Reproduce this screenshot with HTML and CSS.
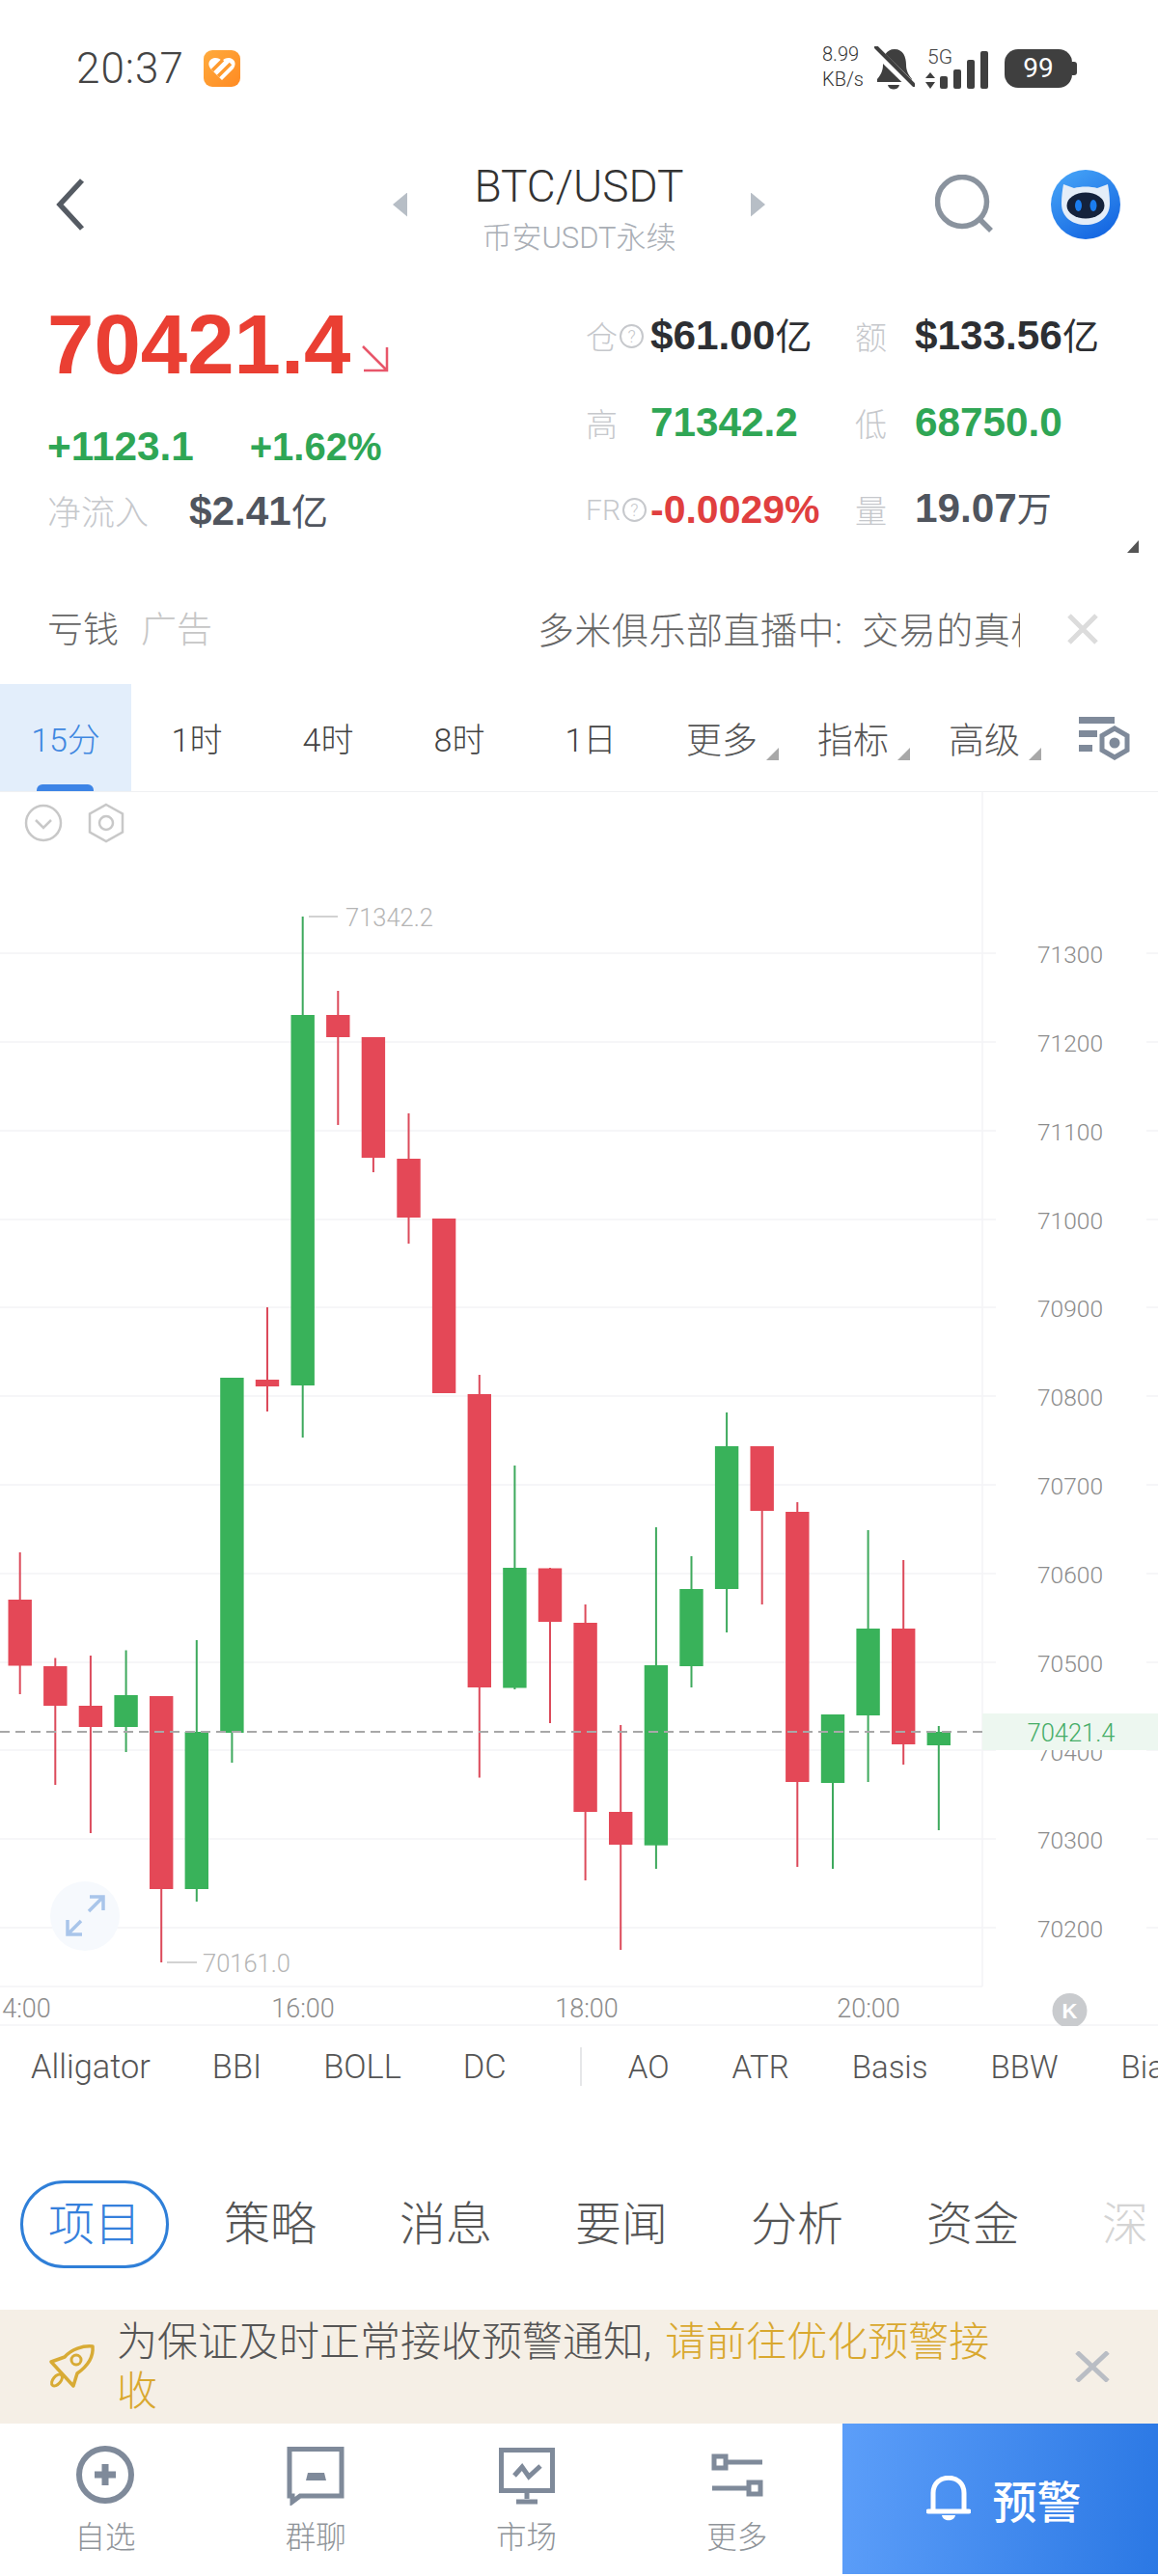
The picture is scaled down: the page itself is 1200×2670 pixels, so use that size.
FILE: index.html
```html
<!DOCTYPE html>
<html lang="zh-CN">
<head>
  <meta charset="UTF-8" />
  <meta name="viewport" content="width=device-width, initial-scale=1.0"/>
  <title>BTC/USDT</title>
  <link rel="stylesheet" href="styles.css">
</head>
<body>

  <!-- Status bar -->
  <div class="status-bar">
    <span class="clock">20:37</span>
    <svg class="app-icon" viewBox="0 0 38 38">
      <defs>
        <linearGradient id="appGrad" x1="0" y1="0" x2="1" y2="1">
          <stop offset="0" stop-color="#ffab3d"/>
          <stop offset="1" stop-color="#ff8a22"/>
        </linearGradient>
      </defs>
      <rect width="38" height="38" rx="9" fill="url(#appGrad)"/>
      <path d="M19 31 L7 19 C3 13 7 8 12 8 C15 8 17 9 19 11 C21 9 23 8 26 8 C31 8 35 13 31 19 Z" fill="#fff"/>
      <path d="M9 21 L20 10 M15 27 L28 14" stroke="#ff9a2e" stroke-width="3.5" fill="none"/>
    </svg>
    <div class="status-right">
      <div class="net-speed"><span>8.99</span><span>KB/s</span></div>
      <svg class="bell-off" viewBox="0 0 42 46">
        <path d="M21 3 C30 3 33 11 33 19 C33 25 35 29 39 34 V37 H3 V34 C7 29 9 25 9 19 C9 11 12 3 21 3 Z" fill="#3f3f3f"/>
        <path d="M14 40 H26 C25 46 15 46 14 40 Z" fill="#3f3f3f"/>
        <path d="M0 3 L41 43" stroke="#fff" stroke-width="9"/>
        <path d="M2 1 L41 40" stroke="#3f3f3f" stroke-width="4" stroke-linecap="round"/>
      </svg>
      <svg class="signal" viewBox="0 0 66 46">
        <text class="signal-text" x="2" y="18">5G</text>
        <path d="M5 27 L10 33 H0 Z M5 44 L0 37 H10 Z" fill="#3f3f3f"/>
        <rect x="15" y="31" width="8" height="13" rx="2" fill="#3f3f3f"/>
        <rect x="29" y="24" width="8" height="20" rx="2" fill="#3f3f3f"/>
        <rect x="43" y="14" width="8" height="30" rx="2" fill="#3f3f3f"/>
        <rect x="57" y="5" width="8" height="39" rx="2" fill="#3f3f3f"/>
      </svg>
      <div class="battery">99</div>
    </div>
  </div>

  <!-- Title bar -->
  <header class="nav-bar">
    <svg class="back" viewBox="0 0 30 56">
      <path d="M27 3 L4 28 L27 53" fill="none" stroke="#555b63" stroke-width="5.5"/>
    </svg>
    <div class="nav-center">
      <span class="tri tri-left"></span>
      <div class="nav-title">
        <div class="symbol">BTC/USDT</div>
        <div class="market">币安USDT永续</div>
      </div>
      <span class="tri tri-right"></span>
    </div>
    <div class="nav-right">
      <svg class="search" viewBox="0 0 62 62">
        <circle cx="28" cy="28" r="25.5" fill="none" stroke="#8a939e" stroke-width="5.5"/>
        <path d="M47 47 L58 58" stroke="#8a939e" stroke-width="5.5"/>
      </svg>
      <svg class="bot" viewBox="0 0 72 72">
        <defs>
          <linearGradient id="botGrad" x1="0.2" y1="0" x2="0.8" y2="1">
            <stop offset="0" stop-color="#45a3f7"/>
            <stop offset="1" stop-color="#1263e0"/>
          </linearGradient>
        </defs>
        <circle cx="36" cy="36" r="36" fill="url(#botGrad)"/>
        <path d="M13 15 L24 19 C31 17 41 17 48 19 L59 15 C60 21 61 27 61 35 C61 49 50 57 36 57 C22 57 11 49 11 35 C11 27 12 21 13 15 Z" fill="#e4edf8"/>
        <ellipse cx="36" cy="37" rx="19.5" ry="13.5" fill="#14223c"/>
        <ellipse cx="28.5" cy="37" rx="3.5" ry="6" fill="#1b7df0"/>
        <ellipse cx="44" cy="37" rx="3.5" ry="6" fill="#1b7df0"/>
      </svg>
    </div>
  </header>

  <!-- Price stats -->
  <section class="stats">
    <div class="stats-left">
      <div class="price-row">
        <span class="price">70421.4</span>
        <svg class="price-arrow" viewBox="0 0 28 28">
          <path d="M1 1 L25 25 M26 2 V26 H2" fill="none" stroke="#e8566a" stroke-width="2.5"/>
        </svg>
      </div>
      <div class="change-row">
        <span class="num green">+1123.1</span>
        <span class="num green pct">+1.62%</span>
      </div>
      <div class="inflow-row">
        <span class="stat-label wide">净流入</span>
        <span class="num slate">$2.41<span class="unit">亿</span></span>
      </div>
    </div>
    <div class="stats-right">
      <div class="stat-label">仓<span class="help">?</span></div>
      <div class="num dark">$61.00<span class="unit">亿</span></div>
      <div class="stat-label">额</div>
      <div class="num dark">$133.56<span class="unit">亿</span></div>

      <div class="stat-label">高</div>
      <div class="num green">71342.2</div>
      <div class="stat-label">低</div>
      <div class="num green">68750.0</div>

      <div class="stat-label fr">FR<span class="help">?</span></div>
      <div class="num red">-0.0029%</div>
      <div class="stat-label">量</div>
      <div class="num slate">19.07<span class="unit small">万</span></div>
    </div>
    <span class="stats-corner"></span>
  </section>

  <!-- Ad line -->
  <div class="ad-row">
    <div class="ad-left">
      <span class="ad-title">亏钱</span>
      <span class="ad-tag">广告</span>
    </div>
    <div class="ad-text">多米俱乐部直播中: 交易的真相</div>
    <svg class="ad-close" viewBox="0 0 32 32">
      <path d="M2 2 L30 30 M30 2 L2 30" stroke="#dcdcdc" stroke-width="5"/>
    </svg>
  </div>

  <!-- Period tabs -->
  <nav class="period-tabs">
    <a class="period active">15分</a>
    <a class="period">1时</a>
    <a class="period">4时</a>
    <a class="period">8时</a>
    <a class="period">1日</a>
    <a class="period word">更多</a>
    <a class="period word">指标</a>
    <a class="period word">高级</a>
    <div class="period-icon">
      <svg viewBox="0 0 56 46" width="56" height="46">
        <path d="M1 1 H38 V8 H1 Z M1 15 H20 V22 H1 Z M1 30 H15 V37 H1 Z" fill="#7f8a9a"/>
        <path d="M38 13 L51 20.5 V35.5 L38 43 L25 35.5 V20.5 Z" fill="none" stroke="#7f8a9a" stroke-width="5"/>
        <circle cx="38" cy="28" r="5.5" fill="#7f8a9a"/>
      </svg>
    </div>
  </nav>

  <!-- Chart canvas, drawn in page coordinates -->
  <svg class="chart" viewBox="0 821 1200 1279">
    <g class="grid">
      <path d="M0 988H1032M1188 988H1200M0 1080H1032M1188 1080H1200M0 1172H1032M1188 1172H1200M0 1264H1032M1188 1264H1200"/>
      <path d="M0 1355H1032M1188 1355H1200M0 1447H1032M1188 1447H1200M0 1539H1032M1188 1539H1200M0 1631H1032M1188 1631H1200"/>
      <path d="M0 1723H1032M1188 1723H1200M0 1814H1032M1188 1814H1200M0 1906H1032M1188 1906H1200M0 1998H1032M1188 1998H1200"/>
      <path d="M1018 821V2059M0 2059H1018M0 2099H1200"/>
    </g>

    <g class="icon-line">
      <circle cx="45" cy="853" r="18"/>
      <path d="M37 850 L45 858 L53 850"/>
      <path d="M110 834 L127 843.500 V862.500 L110 872 L93 862.500 V843.500 Z"/>
      <circle cx="110" cy="853" r="7"/>
    </g>

    <g class="axis">
      <text x="1109" y="998">71300</text>
      <text x="1109" y="1090">71200</text>
      <text x="1109" y="1182">71100</text>
      <text x="1109" y="1274">71000</text>
      <text x="1109" y="1365">70900</text>
      <text x="1109" y="1457">70800</text>
      <text x="1109" y="1549">70700</text>
      <text x="1109" y="1641">70600</text>
      <text x="1109" y="1733">70500</text>
      <text x="1109" y="1825">70400</text>
      <text x="1109" y="1916">70300</text>
      <text x="1109" y="2008">70200</text>
    </g>

    <g class="wick-down">
      <path d="M20.7 1609V1756M57.300 1718.500V1850M93.900 1716V1900M167.200 1758V2034M277 1355V1463"/>
      <path d="M350.300 1027V1166M386.900 1075V1215M423.500 1154V1289M496.800 1425V1842.500M570 1625V1786"/>
      <path d="M606.600 1663V1949M643.200 1788V2021M789.700 1499V1663M826.300 1557V1935M936.200 1617V1829"/>
    </g>
    <g class="wick-up">
      <path d="M130.600 1710.500V1816M203.800 1700V1971M240.400 1428V1827M313.700 950V1490M533.400 1519V1751"/>
      <path d="M679.900 1583V1937M716.500 1613V1749M753.100 1464V1692M863 1777V1937M899.600 1586V1847M972.800 1789V1897"/>
    </g>

    <g class="down">
      <rect x="8.500" y="1658" width="24.400" height="68.500"/>
      <rect x="45.100" y="1727" width="24.400" height="41"/>
      <rect x="81.700" y="1768" width="24.400" height="22"/>
      <rect x="155" y="1758" width="24.400" height="200"/>
      <rect x="264.800" y="1430" width="24.400" height="7"/>
      <rect x="338.100" y="1052" width="24.400" height="23"/>
      <rect x="374.700" y="1075" width="24.400" height="125"/>
      <rect x="411.300" y="1201" width="24.400" height="61"/>
      <rect x="447.900" y="1263" width="24.400" height="181"/>
      <rect x="484.600" y="1445" width="24.400" height="304"/>
      <rect x="557.800" y="1625.500" width="24.400" height="55.500"/>
      <rect x="594.400" y="1682" width="24.400" height="196"/>
      <rect x="631" y="1878" width="24.400" height="34"/>
      <rect x="777.500" y="1499" width="24.400" height="67"/>
      <rect x="814.100" y="1567" width="24.400" height="280"/>
      <rect x="924" y="1688" width="24.400" height="120"/>
    </g>
    <g class="up">
      <rect x="118.400" y="1757" width="24.400" height="33"/>
      <rect x="191.600" y="1795" width="24.400" height="163"/>
      <rect x="228.200" y="1428" width="24.400" height="368"/>
      <rect x="301.500" y="1052" width="24.400" height="384"/>
      <rect x="521.200" y="1625" width="24.400" height="124.500"/>
      <rect x="667.700" y="1726" width="24.400" height="186.700"/>
      <rect x="704.300" y="1647" width="24.400" height="80"/>
      <rect x="740.900" y="1499" width="24.400" height="148"/>
      <rect x="850.800" y="1777" width="24.400" height="71"/>
      <rect x="887.400" y="1688" width="24.400" height="90"/>
      <rect x="960.600" y="1795" width="24.400" height="14"/>
    </g>

    <path class="last-line" d="M0 1795H1018"/>
    <rect class="price-tag" x="1018" y="1776" width="182" height="38"/>
    <text class="price-tag-text" x="1110" y="1805">70421.4</text>

    <path class="extreme-line" d="M320 950H350M173 2034H204"/>
    <text class="extreme" x="358" y="960">71342.2</text>
    <text class="extreme" x="210" y="2044">70161.0</text>

    <circle class="expand-bg" cx="88" cy="1986" r="36"/>
    <path class="expand" d="M92 1981 L106 1967 M93 1966 H107 V1980 M84 1991 L71 2004 M70 1990 V2005 H85"/>

    <g class="time">
      <text x="20" y="2091">14:00</text>
      <text x="314" y="2091">16:00</text>
      <text x="608" y="2091">18:00</text>
      <text x="900" y="2091">20:00</text>
    </g>
    <circle class="k-btn" cx="1108.500" cy="2084" r="18"/>
    <text class="k-text" x="1108.500" y="2092">K</text>
  </svg>

  <!-- Indicator names -->
  <div class="indicators">
    <div class="indicator-group">
      <span>Alligator</span>
      <span>BBI</span>
      <span>BOLL</span>
      <span>DC</span>
    </div>
    <span class="indicator-sep"></span>
    <div class="indicator-group tight">
      <span>AO</span>
      <span>ATR</span>
      <span>Basis</span>
      <span>BBW</span>
      <span>Bias</span>
    </div>
  </div>

  <!-- Info tabs -->
  <nav class="info-tabs">
    <a class="info-tab active">项目</a>
    <a class="info-tab">策略</a>
    <a class="info-tab">消息</a>
    <a class="info-tab">要闻</a>
    <a class="info-tab">分析</a>
    <a class="info-tab">资金</a>
    <a class="info-tab faded">深</a>
  </nav>

  <!-- Notice -->
  <div class="notice">
    <svg class="rocket" viewBox="0 0 50 50">
      <path d="M46 4 C36 3 24 7 17 15 L3 20 L26 45 L30 32 C40 25 47 15 46 4 Z" fill="none" stroke="#d8ab35" stroke-width="3.5" stroke-linejoin="round"/>
      <circle cx="29" cy="18" r="5" fill="none" stroke="#d8ab35" stroke-width="3"/>
      <ellipse cx="9" cy="39" rx="4" ry="7" transform="rotate(40 9 39)" fill="none" stroke="#d8ab35" stroke-width="3"/>
    </svg>
    <p class="notice-text">为保证及时正常接收预警通知, <span class="notice-link">请前往优化预警接收</span></p>
    <svg class="notice-close" viewBox="0 0 36 32">
      <path d="M2 1 L34 31 M34 1 L2 31" stroke="#b9bdc4" stroke-width="5"/>
    </svg>
  </div>

  <!-- Bottom bar -->
  <footer class="bottom-bar">
    <a class="bottom-item">
      <svg viewBox="0 0 64 64" width="64" height="64">
        <circle cx="32" cy="32" r="27" fill="none" stroke="#7f8a9a" stroke-width="6"/>
        <path d="M32 21 V43 M21 32 H43" stroke="#7f8a9a" stroke-width="7"/>
      </svg>
      <span>自选</span>
    </a>
    <a class="bottom-item">
      <svg viewBox="0 0 64 64" width="64" height="64">
        <path d="M5 6.500 H59 V55 H16 L8 61 V55 H5 Z" transform="translate(0 -1)" fill="none" stroke="#7f8a9a" stroke-width="5"/>
        <path d="M24 30 H41 L43 38 H22 Z" fill="#7f8a9a"/>
      </svg>
      <span>群聊</span>
    </a>
    <a class="bottom-item">
      <svg viewBox="0 0 64 64" width="64" height="64">
        <rect x="5.500" y="6.500" width="53" height="42" fill="none" stroke="#7f8a9a" stroke-width="5"/>
        <path d="M19 33 L27 24 L34 34 L46 23" fill="none" stroke="#7f8a9a" stroke-width="5"/>
        <path d="M32 49 V57 M21 60 H43" stroke="#7f8a9a" stroke-width="5"/>
      </svg>
      <span>市场</span>
    </a>
    <a class="bottom-item">
      <svg viewBox="0 0 64 64" width="64" height="64">
        <rect x="8" y="13" width="12" height="12" fill="none" stroke="#7f8a9a" stroke-width="5"/>
        <path d="M22 19 H58" stroke="#7f8a9a" stroke-width="5"/>
        <rect x="44" y="40" width="12" height="12" fill="none" stroke="#7f8a9a" stroke-width="5"/>
        <path d="M6 46 H42" stroke="#7f8a9a" stroke-width="5"/>
      </svg>
      <span>更多</span>
    </a>
    <a class="alert-btn">
      <svg viewBox="0 0 46 48" width="46" height="48">
        <path d="M7 35 V18 C7 -3 39 -3 39 18 V35 M2 37 H44" fill="none" stroke="#fff" stroke-width="5" stroke-linecap="round"/>
        <path d="M16 41 C17 48 29 48 30 41 Z" fill="#fff"/>
      </svg>
      <span>预警</span>
    </a>
  </footer>

</body>
</html>
```

FILE: styles.css
```css
* { margin: 0; padding: 0; box-sizing: border-box; }
body {
  width: 1200px;
  height: 2670px;
  overflow: hidden;
  background: #fff;
  color: #555;
  font-family: 'Roboto', 'Noto Sans CJK SC', sans-serif;
  font-weight: 300;
}

/* --- Status bar --- */
.status-bar {
  height: 100px;
  padding: 42px 89px 0 79px;
  display: flex;
  align-items: center;
}

.clock {
  font-size: 44px;
  letter-spacing: 1px;
  color: #444;
  line-height: 58px;
}

.app-icon {
  width: 38px;
  height: 38px;
  margin-left: 20px;
}

.status-right {
  margin-left: auto;
  display: flex;
  align-items: center;
}

.net-speed {
  width: 42px;
  display: flex;
  flex-direction: column;
  margin-top: -5px;
  font-size: 20px;
  line-height: 26px;
  color: #333;
  white-space: nowrap;
}

.bell-off {
  width: 42px;
  height: 46px;
  margin-left: 12px;
}

.signal {
  width: 66px;
  height: 46px;
  margin-left: 11px;
}

.signal-text {
  font-size: 21px;
  fill: #444;
}

.battery {
  position: relative;
  width: 70px;
  height: 40px;
  margin-left: 16px;
  background: #3f3f3f;
  border-radius: 14px;
  color: #fff;
  font-size: 28px;
  font-weight: 400;
  line-height: 40px;
  text-align: center;
}

.battery::after {
  content: "";
  position: absolute;
  right: -5px;
  top: 13px;
  width: 5px;
  height: 14px;
  background: #3f3f3f;
  border-radius: 0 3px 3px 0;
}

/* --- Title bar --- */
.nav-bar {
  height: 174px;
  padding-top: 50px;
  display: grid;
  grid-template-columns: 1fr 386px 1fr;
  align-items: center;
}

.back {
  width: 30px;
  height: 56px;
  margin-left: 58px;
}

.nav-center {
  display: flex;
  align-items: center;
  justify-content: space-between;
}

.tri {
  width: 15px;
  height: 25px;
  background: #b7bec6;
}

.tri-left { clip-path: polygon(100% 0, 100% 100%, 0 50%); }
.tri-right { clip-path: polygon(0 0, 100% 50%, 0 100%); }

.nav-title {
  margin-top: 10px;
  text-align: center;
}

.symbol {
  font-size: 46px;
  line-height: 52px;
  color: #333;
}

.market {
  margin-top: 8px;
  font-size: 31px;
  line-height: 40px;
  color: #a9aeb5;
}

.nav-right {
  display: flex;
  align-items: center;
  justify-content: flex-end;
  padding-right: 39px;
  gap: 58px;
}

.search { width: 62px; height: 62px; }
.bot { width: 72px; height: 72px; }

/* --- Price stats --- */
.stats {
  position: relative;
  height: 326px;
  padding-top: 29px;
  display: flex;
}

.stats-left {
  width: 607px;
  padding: 4px 0 0 49px;
}

.price-row {
  height: 100px;
  display: flex;
  align-items: center;
}

.price {
  font-family: 'Liberation Sans', sans-serif;
  font-size: 87px;
  font-weight: 700;
  color: #ea3f33;
}

.price-arrow {
  width: 28px;
  height: 28px;
  margin: 29px 0 0 12px;
}

.num {
  font-family: 'Liberation Sans', 'Noto Sans CJK SC', sans-serif;
  font-size: 42.3px;
  font-weight: 700;
  line-height: 50px;
  white-space: nowrap;
}

.unit {
  font-size: 38px;
  font-weight: 400;
}

.unit.small { font-size: 36px; }

.green { color: #2fa655; }
.red { color: #e03f3f; font-size: 41px; }
.dark { color: #2d2f33; }
.slate { color: #50555e; }

.change-row {
  margin-top: 31px;
  display: flex;
  gap: 58px;
}

.num.pct { font-size: 40px; }

.inflow-row {
  margin-top: 17px;
  display: flex;
  align-items: center;
  gap: 42px;
}

.stat-label {
  display: flex;
  align-items: center;
  font-size: 33px;
  color: #c6c8cc;
}

.stat-label.wide {
  margin-top: -5px;
  font-size: 35px;
}

.stat-label.fr { font-size: 30px; }

.help {
  width: 25px;
  height: 25px;
  margin-left: 2px;
  border: 2px solid #c6c8cc;
  border-radius: 50%;
  font-size: 18px;
  line-height: 21px;
  text-align: center;
}

.stats-right {
  display: grid;
  grid-template-columns: 67px 212px 62px 1fr;
  grid-auto-rows: 90px;
  align-items: center;
  height: 270px;
  flex: 1;
}

.stats-corner {
  position: absolute;
  left: 1168px;
  top: 286px;
  width: 12px;
  height: 13px;
  background: #555;
  clip-path: polygon(100% 0, 100% 100%, 0 100%);
}

/* --- Ad line --- */
.ad-row {
  height: 109px;
  padding: 0 62px 9px 49px;
  display: flex;
  align-items: center;
}

.ad-left {
  flex: 1;
  display: flex;
  gap: 23px;
  font-size: 37px;
}

.ad-title { color: #666; }
.ad-tag { color: #c6c6c6; }

.ad-text {
  width: 500px;
  overflow: hidden;
  white-space: nowrap;
  font-size: 38px;
  letter-spacing: 0.5px;
  word-spacing: 10px;
  color: #666;
}

.ad-close {
  width: 32px;
  height: 32px;
  margin: 4px 0 0 49px;
}

/* --- Period tabs --- */
.period-tabs {
  height: 112px;
  border-bottom: 1px solid #f0f1f3;
  display: flex;
}

.period {
  position: relative;
  width: 136px;
  display: flex;
  align-items: center;
  justify-content: center;
  font-size: 34px;
  color: #444;
}

.period.word {
  font-size: 37px;
  color: #555;
}

.period.word::after {
  content: "";
  position: absolute;
  right: 9px;
  top: 66px;
  width: 13px;
  height: 13px;
  background: #a8a8a8;
  clip-path: polygon(100% 0, 100% 100%, 0 100%);
}

.period.active {
  background: #e3eefb;
  color: #3f87e0;
}

.period.active::after {
  content: "";
  position: absolute;
  left: 38px;
  bottom: 0;
  width: 59px;
  height: 7px;
  background: #3d84e6;
  border-radius: 6px 6px 0 0;
}

.period-icon {
  flex: 1;
  padding-left: 2px;
  display: flex;
  align-items: center;
  justify-content: center;
}

/* --- Chart --- */
.chart {
  display: block;
  width: 1200px;
  height: 1279px;
}

.grid path {
  fill: none;
  stroke: #f3f4f6;
  stroke-width: 1.5;
}

.icon-line circle,
.icon-line path {
  fill: none;
  stroke: #c8c8c8;
  stroke-width: 2.5;
}

.axis text {
  font-size: 24.5px;
  fill: #8c8c8c;
  text-anchor: middle;
}

.wick-down path { stroke: #dc4a5b; stroke-width: 2; fill: none; }
.wick-up path { stroke: #3ea95d; stroke-width: 2; fill: none; }
.down rect { fill: #e44857; }
.up rect { fill: #39b25a; }

.last-line {
  stroke: #a8a8a8;
  stroke-width: 2;
  stroke-dasharray: 10 6;
  fill: none;
}

.price-tag { fill: #edf7f0; }

.price-tag-text {
  font-size: 25.5px;
  fill: #45ad67;
  text-anchor: middle;
}

.extreme-line {
  stroke: #c4c4c4;
  stroke-width: 1.5;
  fill: none;
}

.extreme {
  font-size: 25.5px;
  fill: #b5b5b5;
}

.expand-bg { fill: #f6f9fd; }

.expand {
  fill: none;
  stroke: #a9c5ea;
  stroke-width: 3.5;
}

.time text {
  font-size: 27px;
  fill: #8c8c8c;
  text-anchor: middle;
}

.k-btn { fill: #c9cbce; }

.k-text {
  font-family: 'Liberation Sans', sans-serif;
  font-size: 22px;
  font-weight: 700;
  fill: #fff;
  text-anchor: middle;
}

/* --- Indicator names --- */
.indicators {
  height: 82px;
  padding: 2px 0 0 32px;
  display: flex;
  align-items: center;
  overflow: hidden;
  white-space: nowrap;
  font-size: 34.4px;
  color: #555;
}

.indicator-group {
  display: flex;
  gap: 64px;
  flex-shrink: 0;
}

.indicator-group.tight {
  gap: 65px;
  font-size: 33px;
}

.indicator-sep {
  flex-shrink: 0;
  width: 2px;
  height: 40px;
  margin: 0 48px 0 76px;
  background: #e6e7e9;
}

/* --- Info tabs --- */
.info-tabs {
  margin-top: 78px;
  height: 91px;
  padding-left: 21px;
  display: flex;
  gap: 28px;
  white-space: nowrap;
  overflow: hidden;
}

.info-tab {
  flex-shrink: 0;
  height: 91px;
  padding: 0 26px;
  border: 3px solid transparent;
  border-radius: 46px;
  font-size: 48px;
  line-height: 86px;
  color: #555;
}

.info-tab.active {
  border-color: #2f7fd8;
  color: #3580dc;
}

.info-tab.faded { color: #d4d4d4; }

/* --- Notice --- */
.notice {
  margin-top: 43px;
  height: 118px;
  padding-left: 50px;
  background: #f5efe6;
  display: flex;
  align-items: center;
}

.rocket {
  width: 50px;
  height: 50px;
  flex-shrink: 0;
}

.notice-text {
  width: 915px;
  margin-left: 21px;
  font-size: 42px;
  line-height: 51px;
  color: #555;
}

.notice-link {
  margin-left: 4px;
  color: #d9a82f;
}

.notice-close {
  width: 36px;
  height: 32px;
  margin-left: 78px;
}

/* --- Bottom bar --- */
.bottom-bar {
  height: 156px;
  display: flex;
}

.bottom-item {
  width: 218.25px;
  padding-top: 21px;
  display: flex;
  flex-direction: column;
  align-items: center;
}

.bottom-item span {
  margin-top: 16px;
  font-size: 31.5px;
  line-height: 36px;
  color: #8f9499;
}

.alert-btn {
  flex: 1;
  padding-left: 7px;
  background: linear-gradient(95deg, #5c9ef9, #2b78e4);
  display: flex;
  align-items: center;
  justify-content: center;
  gap: 23px;
  color: #fff;
  font-size: 46px;
  font-weight: 500;
}
```
